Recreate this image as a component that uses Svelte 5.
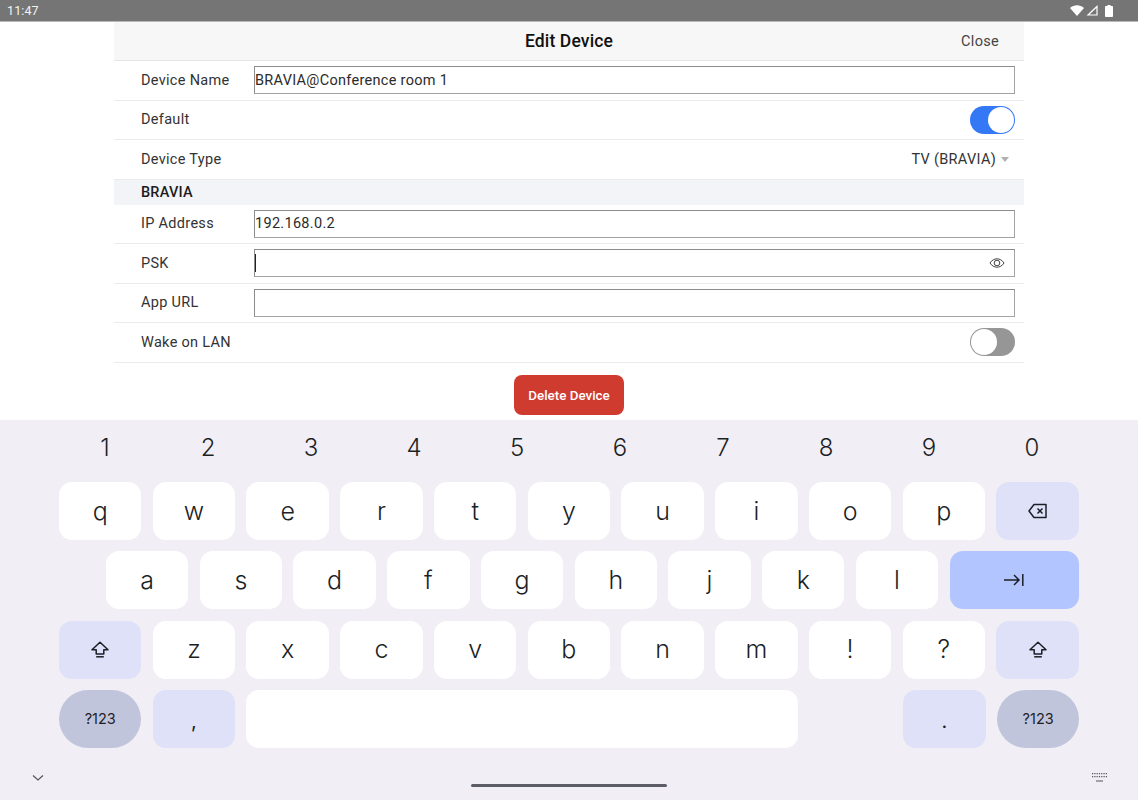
<script>
  const digits = ['1','2','3','4','5','6','7','8','9','0'];
  const row1 = ['q','w','e','r','t','y','u','i','o','p'];
  const row2 = ['a','s','d','f','g','h','j','k','l'];
  const row3 = ['z','x','c','v','b','n','m','!','?'];
</script>

{#snippet shift()}
  <svg width="18" height="17" viewBox="0 0 18 17" fill="none" stroke="#1d1f26" stroke-width="1.5" stroke-linejoin="round"><path d="M9 1.200 1 8.800h4.200v4.200h7.600V8.800H17Z"/><path d="M5.200 15.800h7.600"/></svg>
{/snippet}

<div class="screen">
  <div class="status">
    <span class="time">11:47</span>
    <div class="sys">
      <svg width="14" height="11" viewBox="0 0 14 11"><path d="M0 3C4-.8 10-.8 14 3L7 11Z" fill="#fff"/></svg>
      <svg class="sig" width="12" height="11" viewBox="0 0 12 11"><path d="M11 1.500V10H2Z" fill="none" stroke="#fff" stroke-width="1.200"/></svg>
      <svg class="bat" width="8" height="12" viewBox="0 0 8 12"><path d="M2.400 0h3.200v1H7.200a.8.8 0 0 1 .8.8v9.400a.8.8 0 0 1-.8.8H.8a.8.8 0 0 1-.8-.8V1.800a.8.8 0 0 1 .8-.8h1.600Z" fill="#fff"/></svg>
    </div>
  </div>

  <div class="form">
    <div class="head"><span class="title">Edit Device</span><span class="close">Close</span></div>
    <div class="row"><span class="label">Device Name</span><input class="field" value="BRAVIA@Conference room 1" /></div>
    <div class="row"><span class="label">Default</span><span class="toggle on"><i></i></span></div>
    <div class="row"><span class="label">Device Type</span><span class="select">TV (BRAVIA)<b></b></span></div>
    <div class="section">BRAVIA</div>
    <div class="row"><span class="label">IP Address</span><input class="field" value="192.168.0.2" /></div>
    <div class="row">
      <span class="label">PSK</span>
      <div class="wrap">
        <input class="field" value="" />
        <span class="caret"></span>
        <svg class="eye" width="16" height="12" viewBox="0 0 16 12" fill="none" stroke="#444" stroke-width="1"><path d="M1 6c3.500-5.600 10.500-5.600 14 0-3.500 5.600-10.500 5.600-14 0Z"/><circle cx="8" cy="6" r="2.800"/></svg>
      </div>
    </div>
    <div class="row"><span class="label">App URL</span><input class="field" value="" /></div>
    <div class="row"><span class="label">Wake on LAN</span><span class="toggle"><i></i></span></div>
    <div class="action"><button class="delete">Delete Device</button></div>
  </div>

  <div class="kb">
    <div class="digits">{#each digits as d}<span>{d}</span>{/each}</div>
    <div class="keys">
      <div class="krow">
        {#each row1 as k}<span class="key">{k}</span>{/each}
        <span class="key mod">
          <svg width="20" height="16" viewBox="0 0 20 16" fill="none" stroke="#1d1f26" stroke-width="1.500" stroke-linejoin="round"><path d="M6 1.500h12v13H6L1 8Z"/><path d="M9.500 5.500l5 5M14.500 5.500l-5 5"/></svg>
        </span>
      </div>
      <div class="krow indent">
        {#each row2 as k}<span class="key">{k}</span>{/each}
        <span class="key tab">
          <svg width="20" height="14" viewBox="0 0 20 14" fill="none" stroke="#1d1f26" stroke-width="1.500"><path d="M0 7h15M10 2l5 5-5 5M18.800 1v12"/></svg>
        </span>
      </div>
      <div class="krow">
        <span class="key mod">{@render shift()}</span>
        {#each row3 as k}<span class="key">{k}</span>{/each}
        <span class="key mod">{@render shift()}</span>
      </div>
      <div class="krow">
        <span class="key sym">?123</span>
        <span class="key mod punct">,</span>
        <span class="key space"></span>
        <span class="key blank"></span>
        <span class="key mod punct">.</span>
        <span class="key sym">?123</span>
      </div>
    </div>
    <div class="kfoot">
      <svg width="12" height="8" viewBox="0 0 12 8" fill="none" stroke="#55555c" stroke-width="1.200"><path d="M1 1.500 6 6l5-4.500"/></svg>
      <div class="handle"></div>
      <svg width="15" height="10" viewBox="0 0 15 10" fill="#55555c"><path d="M0 0h1.200v1.200H0zM2.300 0h1.200v1.200H2.300zM4.600 0h1.200v1.200H4.600zM6.900 0h1.200v1.200H6.900zM9.200 0h1.200v1.200H9.200zM11.500 0h1.200v1.200h-1.200zM13.800 0H15v1.200h-1.200zM0 3h1.200v1.200H0zM2.300 3h1.200v1.200H2.300zM4.600 3h1.200v1.200H4.600zM6.900 3h1.200v1.200H6.900zM9.200 3h1.200v1.200H9.200zM11.500 3h1.200v1.200h-1.200zM13.800 3H15v1.200h-1.200zM4 7.500h7v1H4z"/></svg>
    </div>
  </div>
</div>

<style>
  :global(body) { margin: 0; background: #fff; }
  .screen { width: 1138px; height: 800px; display: flex; flex-direction: column; overflow: hidden; font-family: Roboto, sans-serif; color: #2b2b2b; }

  .status { height: 21px; flex: none; background: #757575; border-bottom: 1px solid #b9b9b9; display: flex; align-items: center; justify-content: space-between; padding: 0 25px 0 7px; color: #fff; }
  .time { font-size: 12.500px; letter-spacing: .1px; color: #f2f2f2; }
  .sys { display: flex; align-items: center; gap: 2px; }
  .bat { margin-left: 5px; }

  .form { width: 910px; margin: 0 auto; flex: none; }
  .head { height: 38px; background: #f7f7f7; border-bottom: 1px solid #e6e6e6; display: flex; align-items: center; justify-content: center; position: relative; }
  .title { font-size: 17.500px; font-weight: 500; color: #111; letter-spacing: .15px; }
  .close { position: absolute; right: 25px; top: 11px; font-size: 14.500px; color: #444; letter-spacing: .3px; }

  .row { height: 38.500px; border-bottom: 1px solid #ebebeb; display: flex; align-items: center; padding: 0 9px 0 27px; }
  .label { width: 113px; flex: none; font-size: 14.500px; letter-spacing: .3px; color: #333; }
  .field { flex: 1; width: 100%; height: 28px; box-sizing: border-box; border: 1px solid #a3a3a3; border-top-color: #8c8c8c; border-left-color: #8c8c8c; outline: none; padding: 0; margin: 0; font: 14.500px Roboto, sans-serif; letter-spacing: .3px; color: #2b2b2b; background: #fff; border-radius: 0; display: block; }
  .wrap { flex: 1; position: relative; }
  .caret { position: absolute; left: 1px; top: 5px; width: 1px; height: 18px; background: #222; }
  .eye { position: absolute; right: 10px; top: 8px; }

  .toggle { margin-left: auto; width: 45px; height: 28px; border-radius: 14px; background: #969696; position: relative; }
  .toggle i { position: absolute; left: 1px; top: 1px; width: 26px; height: 26px; border-radius: 50%; background: #fff; }
  .toggle.on { background: #3478f6; }
  .toggle.on i { left: 18px; }

  .select { margin-left: auto; font-size: 14.500px; letter-spacing: .3px; color: #333; display: flex; align-items: center; }
  .select b { width: 0; height: 0; margin: 1px 6px 0 5px; border: 4.500px solid transparent; border-top: 5px solid #b0b0b0; border-bottom: 0; }

  .section { height: 25px; background: #f3f4f8; padding-left: 27px; font-size: 14.500px; font-weight: 500; line-height: 25px; color: #1c1c1c; letter-spacing: .2px; }

  .action { display: flex; justify-content: center; padding-top: 12.500px; }
  .delete { width: 110px; height: 40px; border: 0; border-radius: 8px; background: #d03b30; color: #fff; font: 500 13.400px Roboto, sans-serif; padding: 0; }

  .kb { margin-top: auto; height: 380px; flex: none; background: #f1eff5; display: flex; flex-direction: column; font-family: Inter, Roboto, sans-serif; color: #1d1f26; box-sizing: border-box; }
  .digits { height: 62px; flex: none; display: flex; padding: 0 53.500px; font-size: 24px; font-weight: 350; }
  .digits span { width: 103px; text-align: center; line-height: 55px; }
  .keys { display: flex; flex-direction: column; gap: 11.400px; padding: 0 59px; }
  .krow { display: flex; gap: 11.300px; height: 58px; }
  .indent { padding-left: 46.900px; }
  .key { width: 82.450px; flex: none; border-radius: 13px; background: #fff; display: flex; align-items: center; justify-content: center; font-size: 25px; font-weight: 350; padding-bottom: 1px; box-sizing: border-box; }
  .mod { background: #dee1f7; }
  .tab { flex: 1; background: #b2c5ff; }
  .sym { background: #c1c5dc; border-radius: 29px; font-size: 14.500px; font-weight: 400; }
  .punct { font-size: 20px; font-weight: 400; padding-top: 5px; }
  .space { width: 551.700px; }
  .blank { background: none; }
  .kfoot { flex: 1; display: flex; align-items: center; justify-content: space-between; padding: 8px 31px 0 32px; position: relative; }
  .handle { width: 196px; height: 3px; border-radius: 2px; background: #5c5c66; position: absolute; left: 471px; top: 36px; }
</style>
